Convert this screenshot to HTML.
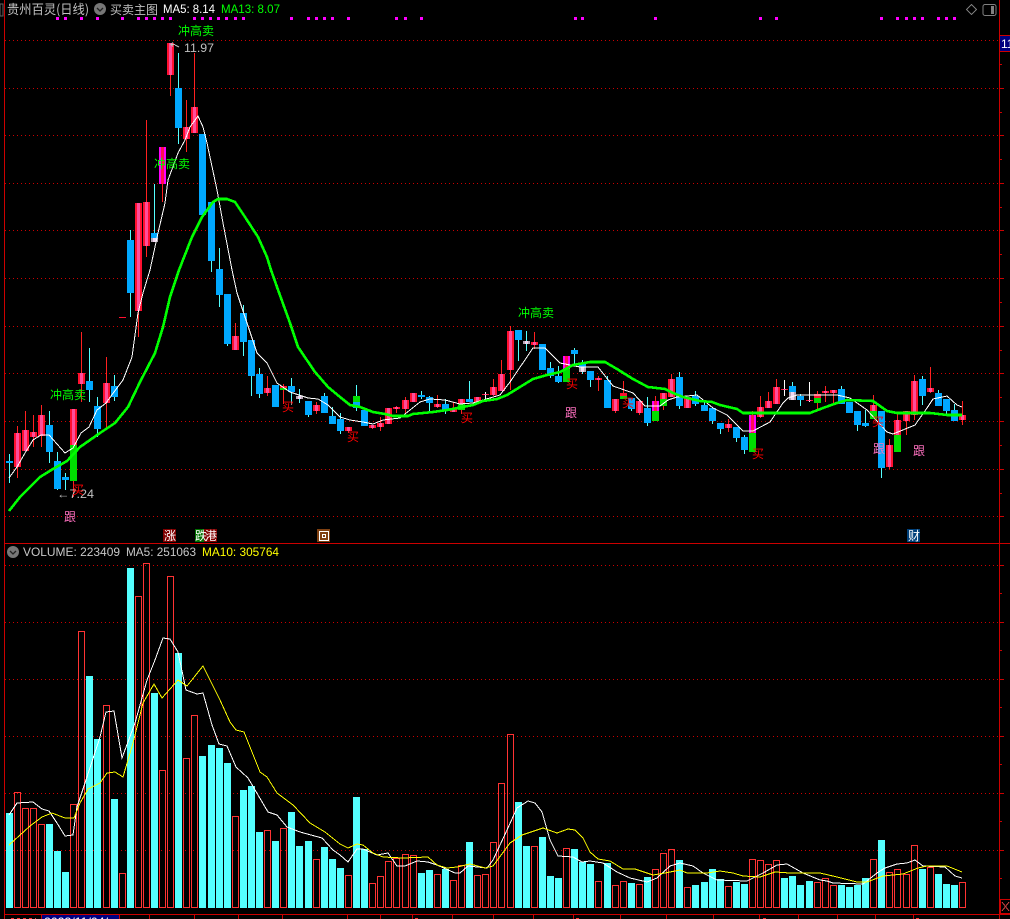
<!DOCTYPE html>
<html><head><meta charset="utf-8"><style>
html,body{margin:0;padding:0;background:#000;width:1010px;height:919px;overflow:hidden}
svg{display:block}
text{font-family:"Liberation Sans","WenQuanYi Zen Hei","Noto Sans CJK SC",sans-serif;font-size:12px}
.c{font-family:"WenQuanYi Zen Hei","Noto Sans CJK SC",sans-serif}
</style></head><body>
<svg width="1010" height="919" viewBox="0 0 1010 919" xmlns="http://www.w3.org/2000/svg">
<rect width="1010" height="919" fill="#000"/>
<g shape-rendering="crispEdges" fill="none">
<!-- grid -->
<path stroke="#cc0000" stroke-dasharray="1 3" d="M5 40.5H998M5 88.5H998M5 135.5H998M5 183.5H998M5 230.5H998M5 278.5H998M5 326.5H998M5 373.5H998M5 421.5H998M5 469.5H998M5 516.5H998M5 565.5H998M5 622.5H998M5 679.5H998M5 736.5H998M5 793.5H998M5 850.5H998"/>
<!-- frame -->
<path stroke="#cc0000" d="M4.5 0V919M999.5 0V919M4 543.5H1010M4 914.5H1010"/>
<path stroke="#cc0000" d="M999 40.5h5M999 64.5h3M999 88.5h5M999 112.5h3M999 135.5h5M999 159.5h3M999 183.5h5M999 207.5h3M999 230.5h5M999 254.5h3M999 278.5h5M999 302.5h3M999 326.5h5M999 350.5h3M999 373.5h5M999 397.5h3M999 421.5h5M999 445.5h3M999 469.5h5M999 493.5h3M999 516.5h5M999 565.5h5M999 593.5h3M999 622.5h5M999 650.5h3M999 679.5h5M999 707.5h3M999 736.5h5M999 764.5h3M999 793.5h5M999 821.5h3M999 850.5h5M999 878.5h3"/>
<path stroke="#cc0000" d="M41.5 915v4M119.5 915v4M149.5 915v4M194.5 915v4M238.5 915v4M282.5 915v4M347.5 915v4M380.5 915v4M412.5 915v4M452.5 915v4M493.5 915v4M533.5 915v4M573.5 915v4M620.5 915v4M666.5 915v4M713.5 915v4M759.5 915v4M798.5 915v4M837.5 915v4M875.5 915v4M913.5 915v4"/>
<path stroke="#ff3030" stroke-dasharray="3 3" d="M11 918.5H36"/>
<path stroke="#ff3030" d="M415 918.5h3M576 918.5h3M763 918.5h3M916 918.5h3"/>
<rect x="42" y="915" width="77" height="4" fill="#000080"/>
<!-- magenta dots -->
<path stroke="#ff00ff" stroke-width="3" d="M56 18.5h3M64 18.5h3M80 18.5h3M96 18.5h3M121 18.5h3M137 18.5h3M145 18.5h3M153 18.5h3M161 18.5h3M169 18.5h3M193 18.5h3M201 18.5h3M209 18.5h3M217 18.5h3M225 18.5h3M234 18.5h3M242 18.5h3M290 18.5h3M307 18.5h3M315 18.5h3M323 18.5h3M331 18.5h3M347 18.5h3M395 18.5h3M404 18.5h3M420 18.5h3M574 18.5h3M581 18.5h3M654 18.5h3M759 18.5h3M775 18.5h3M880 18.5h3M896 18.5h3M905 18.5h3M913 18.5h3M921 18.5h3M937 18.5h3M945 18.5h3M953 18.5h3"/>
<!-- wicks -->
<path stroke="#ff2020" d="M17.5 426V478M25.5 411V451M33.5 415V447M41.5 405V447M73.5 481V497M81.5 332V402M106.5 357V428M138.5 311V337M146.5 120V257M162.5 184V202M170.5 75V96M186.5 100V152M194.5 53V133M235.5 323V350M267.5 376V396M283.5 384V404M316.5 402V414M348.5 427V433M372.5 425V429M380.5 417V431M396.5 406V413M405.5 397V413M437.5 395V408M453.5 402V412M461.5 410V414M493.5 379V396M501.5 360V391M510.5 326V390M534.5 332V349M598.5 376V391M615.5 411V413M623.5 381V399M639.5 400V415M655.5 396V401M663.5 406V410M671.5 374V397M728.5 419V432M752.5 411V415M760.5 396V418M768.5 392V408M776.5 379V404M817.5 391V410M825.5 386V402M833.5 390V403M873.5 395V405M889.5 439V469M897.5 414V420M906.5 421V435M914.5 375V420M930.5 367V393M962.5 401V425"/>
<path stroke="#fff" d="M485.5 392V400M784.5 380V396M809.5 382V402"/>
<path stroke="#54ffff" d="M9.5 454V483M49.5 411V463M57.5 452V490M65.5 473V490M89.5 348V402M97.5 397V437M114.5 375V401M130.5 230V317M154.5 184V233M178.5 53V144M211.5 261V272M219.5 248V307M227.5 344V346M243.5 305V356M251.5 376V396M259.5 368V398M291.5 378V405M299.5 389V403M308.5 415V417M324.5 393V396M332.5 407V416M340.5 413V434M356.5 385V411M421.5 391V399M429.5 396V411M445.5 399V414M469.5 381V399M518.5 340V361M526.5 331V351M550.5 362V378M558.5 366V383M574.5 348V364M582.5 360V374M590.5 380V387M607.5 376V380M631.5 409V411M647.5 397V426M679.5 372V409M695.5 391V406M704.5 400V405M712.5 421V424M720.5 429V434M736.5 438V442M744.5 435V454M792.5 382V386M800.5 394V406M841.5 386V389M857.5 425V431M865.5 410V427M881.5 468V478M922.5 376V405M938.5 390V393M946.5 411V414M954.5 404V410"/>
<!-- red bodies -->
<path stroke="#ff1030" stroke-width="7" d="M17.5 433V467M25.5 430V451M33.5 432V437M41.5 415V436M73.5 409V445M81.5 373V384M106.5 383V403M138.5 203V311M146.5 202V246M170.5 43V75M186.5 127V139M194.5 107V133M235.5 336V350M267.5 388V393M283.5 386V388M316.5 405V411M348.5 427V431M372.5 425V428M380.5 423V427M388.5 408V424M396.5 407V409M405.5 400V409M413.5 393V402M437.5 404V407M453.5 408V412M461.5 399V404M477.5 397V402M485.5 394V395M493.5 387V395M501.5 374V391M510.5 331V370M534.5 342V345M598.5 378V380M615.5 399V411M623.5 393V396M639.5 401V413M663.5 393V399M671.5 379V397M687.5 397V408M728.5 424V428M760.5 407V417M768.5 401V408M776.5 387V404M784.5 389V390M809.5 400V401M817.5 394V398M825.5 391V393M833.5 390V393M873.5 405V411M889.5 445V467M897.5 420V435M906.5 411V421M914.5 381V415M930.5 388V392M962.5 415V420M122.5 317V318"/>
<path stroke="#ff4d9a" stroke-width="3" d="M17.5 433V467M25.5 430V451M33.5 432V437M41.5 415V436M73.5 409V445M81.5 373V384M106.5 383V403M138.5 203V311M146.5 202V246M170.5 43V75M186.5 127V139M194.5 107V133M235.5 336V350M267.5 388V393M316.5 405V411M348.5 427V431M372.5 425V428M380.5 423V427M388.5 408V424M396.5 407V409M405.5 400V409M413.5 393V402M437.5 404V407M453.5 408V412M461.5 399V404M477.5 397V402M485.5 394V395M493.5 387V395M501.5 374V391M510.5 331V370M534.5 342V345M598.5 378V380M615.5 399V411M639.5 401V413M663.5 393V399M671.5 379V397M687.5 397V408M728.5 424V428M760.5 407V417M768.5 401V408M776.5 387V404M784.5 389V390M809.5 400V401M825.5 391V393M833.5 390V393M873.5 405V411M889.5 445V467M897.5 420V435M906.5 411V421M914.5 381V415M930.5 388V392M962.5 415V420"/>
<!-- magenta bodies -->
<path stroke="#ff00ff" stroke-width="7" d="M162.5 147V184M566.5 356V369M655.5 401V411M752.5 415V433"/>
<path stroke="#ff0f50" stroke-width="3" d="M162.5 147V184M566.5 356V369M655.5 401V411M752.5 415V433"/>
<!-- blue bodies -->
<path stroke="#00a8ff" stroke-width="7" d="M9.5 461V463M49.5 425V452M57.5 461V489M65.5 477V480M89.5 381V390M97.5 406V429M114.5 386V397M130.5 240V293M154.5 233V238M178.5 88V128M202.5 134V215M211.5 202V261M219.5 269V295M227.5 294V344M243.5 313V342M251.5 340V376M259.5 374V394M275.5 385V407M291.5 386V392M308.5 401V415M324.5 396V413M332.5 416V424M340.5 419V431M356.5 402V408M364.5 410V426M421.5 395V397M429.5 397V403M445.5 404V411M469.5 399V402M518.5 330V340M542.5 344V370M550.5 368V376M558.5 376V382M574.5 350V354M582.5 364V367M590.5 371V380M607.5 380V408M631.5 398V409M647.5 408V423M679.5 377V406M695.5 396V404M704.5 405V411M712.5 408V421M720.5 423V429M736.5 427V438M744.5 437V450M792.5 386V392M800.5 396V400M841.5 389V404M849.5 402V413M857.5 411V425M865.5 423V426M881.5 411V468M922.5 379V396M938.5 393V406M946.5 399V411M954.5 410V421"/>
<!-- grey-pink bodies -->
<path stroke="#b8a8b8" stroke-width="7" d="M154.5 238V242M299.5 396V399M526.5 341V344M582.5 367V372M792.5 392V400"/>
<path stroke="#f0d8f0" stroke-width="3" d="M154.5 238V242M299.5 396V399M526.5 341V344M582.5 367V372M792.5 392V400"/>
<!-- green bodies -->
<path stroke="#00dd00" stroke-width="7" d="M73.5 445V481M283.5 388V390M356.5 396V402M461.5 404V410M566.5 369V382M623.5 396V399M655.5 411V421M663.5 399V406M752.5 433V452M817.5 398V403M873.5 411V419M897.5 435V452"/>
<!-- MA lines price -->
<polyline stroke="#fff" points="9,478 17,467 25,453 33,440 41,435 49,435 65,453 73,448 81,433 89,427 97,410 106,403 114,392 123,380 132,357 138,313 143,293 150,270 158,233 165,203 168,180 178,153 185,140 190,127 198,116 203,127 207,143 217,190 223,223 232,270 237,293 247,323 257,353 267,363 277,383 290,392 308,398 318,399 328,405 340,417 350,420 363,422 373,424 383,420 400,418 420,402 430,399 445,400 460,404 473,403 500,395 510,382 533,348 545,348 560,363 580,367 598,367 613,386 633,393 645,406 660,406 668,400 677,397 697,395 713,408 727,415 743,431 753,431 770,422 783,403 788,398 797,395 837,395 850,398 867,410 887,432 893,434 915,425 927,408 933,399 947,396 957,405 962,407"/>
<polyline stroke="#00ff00" stroke-width="2.6" points="9,511 20,497 40,477 53,469 67,461 80,447 100,433 115,423 128,407 140,382 155,353 163,327 170,297 179,270 192,237 202,217 213,202 218,199 227,199 235,202 245,217 258,237 267,257 271,270 277,287 290,323 298,347 315,372 328,387 340,397 350,405 360,407 373,412 385,414 393,416 408,416 413,414 433,412 447,410 473,405 483,401 497,399 507,395 520,387 533,379 547,375 560,372 573,365 590,362 605,362 617,369 633,379 648,387 665,389 673,393 683,397 700,401 712,402 720,405 737,409 743,413 763,413 768,413 810,413 823,408 837,403 847,400 873,401 887,411 897,413 930,413 947,415 962,415"/>
<!-- volume bars -->
<path stroke="#54ffff" stroke-width="7" d="M9.5 813V908M49.5 824V908M57.5 851V908M65.5 872V908M89.5 676V908M97.5 739V908M114.5 799V908M130.5 568V908M154.5 693V908M178.5 653V908M202.5 756V908M211.5 745V908M219.5 748V908M227.5 763V908M243.5 790V908M251.5 786V908M259.5 832V908M275.5 841V908M291.5 812V908M299.5 846V908M308.5 841V908M324.5 847V908M332.5 859V908M340.5 868V908M356.5 797V908M364.5 849V908M421.5 873V908M429.5 870V908M445.5 869V908M469.5 842V908M518.5 802V908M526.5 846V908M542.5 837V908M550.5 876V908M558.5 878V908M574.5 849V908M582.5 862V908M590.5 864V908M607.5 863V908M631.5 883V908M647.5 877V908M679.5 860V908M695.5 885V908M704.5 882V908M712.5 869V908M720.5 879V908M736.5 882V908M744.5 884V908M784.5 878V908M792.5 876V908M800.5 885V908M809.5 881V908M841.5 885V908M849.5 887V908M857.5 885V908M865.5 878V908M881.5 840V908M922.5 869V908M938.5 874V908M946.5 884V908M954.5 885V908"/>
<path stroke="#ff3333" d="M14.5 792.5h6V907.5h-6ZM22.5 808.5h6V907.5h-6ZM30.5 808.5h6V907.5h-6ZM38.5 824.5h6V907.5h-6ZM70.5 804.5h6V907.5h-6ZM78.5 631.5h6V907.5h-6ZM103.5 705.5h6V907.5h-6ZM119.5 873.5h6V907.5h-6ZM135.5 596.5h6V907.5h-6ZM143.5 563.5h6V907.5h-6ZM159.5 770.5h6V907.5h-6ZM167.5 576.5h6V907.5h-6ZM183.5 758.5h6V907.5h-6ZM191.5 715.5h6V907.5h-6ZM232.5 816.5h6V907.5h-6ZM264.5 830.5h6V907.5h-6ZM280.5 828.5h6V907.5h-6ZM313.5 859.5h6V907.5h-6ZM345.5 875.5h6V907.5h-6ZM369.5 883.5h6V907.5h-6ZM377.5 876.5h6V907.5h-6ZM385.5 861.5h6V907.5h-6ZM393.5 858.5h6V907.5h-6ZM402.5 854.5h6V907.5h-6ZM410.5 855.5h6V907.5h-6ZM434.5 874.5h6V907.5h-6ZM450.5 880.5h6V907.5h-6ZM458.5 865.5h6V907.5h-6ZM474.5 875.5h6V907.5h-6ZM482.5 874.5h6V907.5h-6ZM490.5 842.5h6V907.5h-6ZM498.5 783.5h6V907.5h-6ZM507.5 734.5h6V907.5h-6ZM531.5 846.5h6V907.5h-6ZM563.5 848.5h6V907.5h-6ZM595.5 881.5h6V907.5h-6ZM612.5 885.5h6V907.5h-6ZM620.5 881.5h6V907.5h-6ZM636.5 884.5h6V907.5h-6ZM652.5 869.5h6V907.5h-6ZM660.5 853.5h6V907.5h-6ZM668.5 849.5h6V907.5h-6ZM684.5 887.5h6V907.5h-6ZM725.5 886.5h6V907.5h-6ZM749.5 859.5h6V907.5h-6ZM757.5 860.5h6V907.5h-6ZM765.5 864.5h6V907.5h-6ZM773.5 860.5h6V907.5h-6ZM814.5 882.5h6V907.5h-6ZM822.5 878.5h6V907.5h-6ZM830.5 885.5h6V907.5h-6ZM870.5 859.5h6V907.5h-6ZM886.5 872.5h6V907.5h-6ZM894.5 869.5h6V907.5h-6ZM903.5 874.5h6V907.5h-6ZM911.5 845.5h6V907.5h-6ZM927.5 867.5h6V907.5h-6ZM959.5 882.5h6V907.5h-6Z"/>
<!-- volume MAs -->
<polyline stroke="#fff" points="9,815 17,803 33,802 42,809 49,811 57,823 65,836 73,835 77,807 87,777 100,737 106,712 114,711 122,758 135,723 147,680 155,660 163,638 170,639 178,652 186,690 197,694 203,693 212,725 219,744 227,746 236,767 248,778 268,812 277,815 287,827 300,832 322,838 333,850 340,855 348,862 357,849 363,849 377,855 388,853 397,866 405,866 417,861 428,862 437,865 455,873 460,873 468,866 487,868 493,860 507,830 517,808 528,801 535,803 542,812 550,840 558,856 573,857 582,862 590,861 603,863 617,872 630,878 647,882 657,878 670,866 680,863 693,866 703,873 717,880 747,881 763,873 777,865 787,864 803,873 820,880 827,881 833,883 863,884 877,873 885,868 897,864 907,863 915,860 923,866 945,867 955,876 962,878"/>
<polyline stroke="#ffff00" points="9,845 30,826 42,817 52,813 65,818 74,818 80,803 88,789 100,783 107,773 115,772 123,777 133,743 143,703 154,684 162,698 178,680 187,686 203,666 220,700 230,722 236,730 244,732 260,772 267,777 277,793 293,805 310,823 325,832 340,844 348,848 357,844 363,845 373,853 383,857 403,858 428,857 437,865 447,868 457,867 470,864 485,868 493,866 510,843 522,835 543,828 557,833 568,829 575,830 583,838 590,852 598,859 610,861 623,869 635,869 653,875 665,873 680,870 687,873 707,873 720,871 733,873 743,876 760,877 775,872 790,873 820,873 837,877 857,882 867,882 883,876 903,874 918,868 927,866 947,866 962,872"/>
<!-- right labels -->
<rect x="1000" y="36" width="10" height="15" fill="#000080"/>
<path stroke="#cc0000" d="M1000 35.5h10M1000 51.5h10"/>
<path stroke="#cc0000" d="M1000.5 900V913M1000 899.5h10M1000 913.5h10"/>
<path stroke="#c84040" d="M1002 902l7 9M1009 902l-7 9"/>
<!-- bottom tags -->
<rect x="163" y="529" width="13" height="13" fill="#800000"/>
<rect x="195" y="529" width="9" height="13" fill="#007000"/>
<rect x="204" y="529" width="13" height="13" fill="#800000"/>
<rect x="317" y="529" width="13" height="13" fill="#804010"/>
<rect x="907" y="529" width="13" height="13" fill="#00407a"/>
<!-- top right icons -->
<path stroke="#7a7a7a" d="M971.5 4.5l5 5-5 5-5-5Z"/>
</g>
<path d="M985 4.5h9a2 2 0 0 1 2 2v7a2 2 0 0 1-2 2h-9a2 2 0 0 1-2-2v-7a2 2 0 0 1 2-2Z" fill="none" stroke="#808080"/>
<rect x="991" y="6" width="3" height="8" fill="#808080"/>
<rect x="0" y="4" width="3" height="12" fill="none" stroke="#666"/>
<circle cx="100" cy="9" r="6" fill="#777"/><path d="M97 8l3 3 3-3" fill="none" stroke="#222" stroke-width="1.3"/>
<circle cx="13" cy="552" r="6" fill="#777"/><path d="M10 551l3 3 3-3" fill="none" stroke="#222" stroke-width="1.3"/>
<!-- header text -->
<text class="c" x="7" y="14" fill="#c0c0c0" textLength="82" lengthAdjust="spacingAndGlyphs" style="font-size:13px">贵州百灵(日线)</text>
<text class="c" x="110" y="14" fill="#c0c0c0" textLength="48" style="font-size:12px">买卖主图</text>
<text x="163" y="13" fill="#fff" textLength="52" lengthAdjust="spacingAndGlyphs">MA5: 8.14</text>
<text x="221" y="13" fill="#00ff00" textLength="59" lengthAdjust="spacingAndGlyphs">MA13: 8.07</text>
<text x="23" y="556" fill="#c8c8c8" textLength="97" lengthAdjust="spacingAndGlyphs">VOLUME: 223409</text>
<text x="126" y="556" fill="#c8c8c8" textLength="70" lengthAdjust="spacingAndGlyphs">MA5: 251063</text>
<text x="202" y="556" fill="#ffff00" textLength="77" lengthAdjust="spacingAndGlyphs">MA10: 305764</text>
<text x="1001" y="48" fill="#fff">11</text>
<text x="44" y="926" fill="#fff" textLength="64" lengthAdjust="spacingAndGlyphs">2023/11/04/</text>
<!-- annotations -->
<text class="c" x="178" y="35" fill="#00ff00" textLength="36">冲高卖</text>
<text class="c" x="154" y="168" fill="#00ff00" textLength="36">冲高卖</text>
<text class="c" x="50" y="399" fill="#00ff00" textLength="36">冲高卖</text>
<text class="c" x="518" y="317" fill="#00ff00" textLength="36">冲高卖</text>
<path d="M175 44.5h-4l2-2m-2 2l2 2M175 45l4 2" fill="none" stroke="#c0c0c0"/>
<text x="184" y="52" fill="#c0c0c0" textLength="30" lengthAdjust="spacingAndGlyphs">11.97</text>
<text x="57" y="498" fill="#c0c0c0" textLength="37" lengthAdjust="spacingAndGlyphs">←7.24</text>
<text class="c" x="72" y="494" fill="#ff0000">买</text>
<text class="c" x="282" y="411" fill="#ff0000">买</text>
<text class="c" x="347" y="441" fill="#ff0000">买</text>
<text class="c" x="461" y="422" fill="#ff0000">买</text>
<text class="c" x="566" y="388" fill="#ff0000">买</text>
<text class="c" x="622" y="407" fill="#ff0000">买</text>
<text class="c" x="752" y="458" fill="#ff0000">买</text>
<text class="c" x="872" y="426" fill="#ff0000">买</text>
<text class="c" x="64" y="521" fill="#ff70c0">跟</text>
<text class="c" x="565" y="417" fill="#ff70c0">跟</text>
<text class="c" x="873" y="453" fill="#ff70c0">跟</text>
<text class="c" x="913" y="455" fill="#ff70c0">跟</text>
<text class="c" x="164" y="540" fill="#fff">涨</text>
<text class="c" x="195" y="540" fill="#fff">跌</text>
<text class="c" x="205" y="540" fill="#fff">港</text>
<text class="c" x="908" y="540" fill="#fff">财</text>
<g fill="none" stroke="#fff" shape-rendering="crispEdges"><rect x="319.5" y="531.5" width="9" height="9"/><rect x="322.5" y="534.5" width="3" height="3"/></g>
</svg>
</body></html>
